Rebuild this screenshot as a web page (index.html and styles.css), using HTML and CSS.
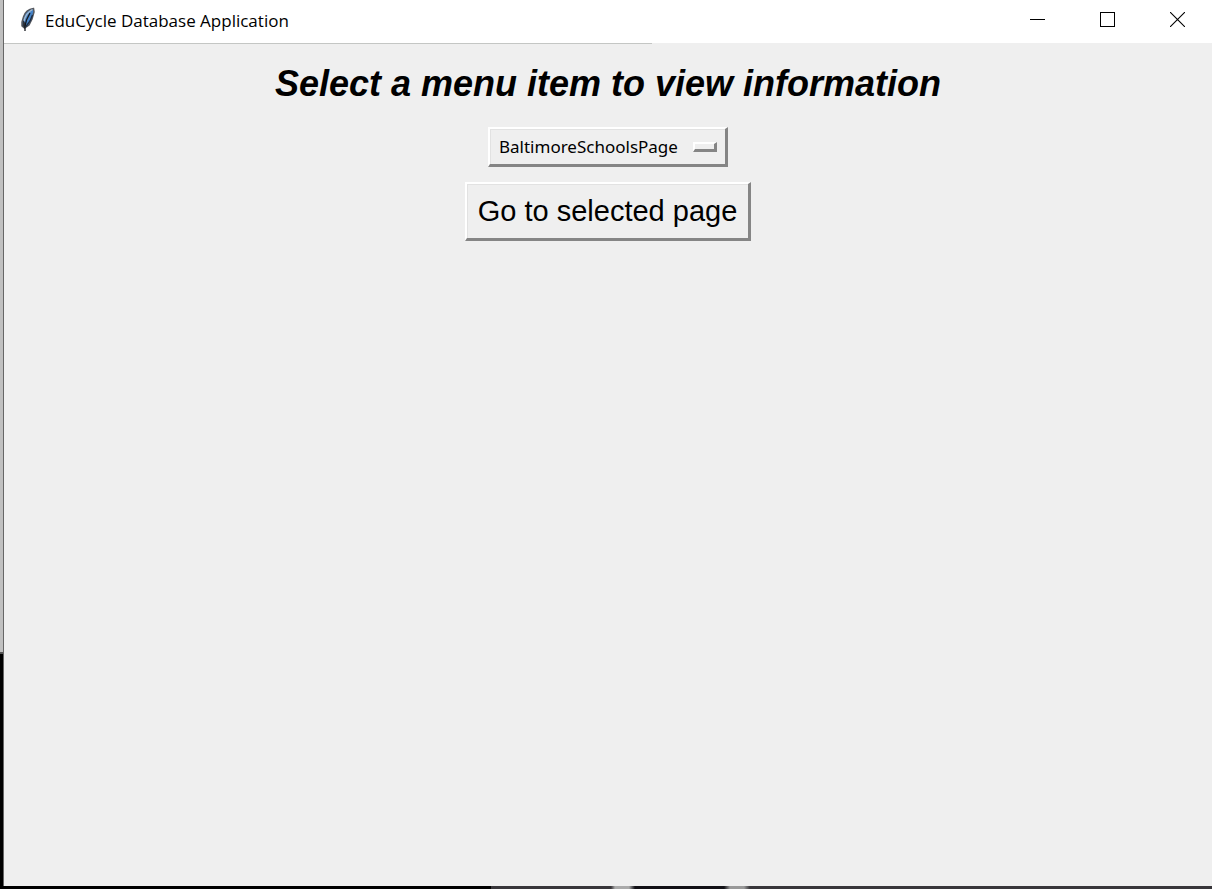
FILE: index.html
```html
<!DOCTYPE html>
<html lang="en">
<head>
<meta charset="utf-8">
<title>EduCycle Database Application</title>
<link rel="stylesheet" href="styles.css">
</head>
<body>
<div class="window">
  <header class="titlebar">
    <svg class="app-icon" width="16" height="26" viewBox="0 0 16 26" aria-hidden="true">
      <path d="M13.500 1.500 C9 2 5 5 3.500 10 L2 15 L2 19 L4.500 21 L9 18 L12 12 L14 5 Z" fill="#4583c8" stroke="#55585e" stroke-width="1.500"/>
      <path d="M12.500 2.500 C8 5 5 9 4 14" fill="none" stroke="#a9bccf" stroke-width="1.400"/>
      <path d="M3 13 L2.500 19 L5 21 L6 17 Z" fill="#30343b"/>
      <path d="M12.500 8 L10 14 L6 19.500" fill="none" stroke="#1c2d45" stroke-width="1.400"/>
      <path d="M10 6 L6.500 13 L5 19 L5 24" fill="none" stroke="#14181e" stroke-width="1.300"/>
    </svg>
    <span class="app-title">EduCycle Database Application</span>
    <div class="window-controls">
      <button class="control" type="button" aria-label="Minimize">
        <svg width="15" height="15" viewBox="0 0 15 15" shape-rendering="crispEdges"><path d="M0 7.5H15" stroke="#000"/></svg>
      </button>
      <button class="control" type="button" aria-label="Maximize">
        <svg width="15" height="15" viewBox="0 0 15 15" shape-rendering="crispEdges"><rect x=".5" y=".5" width="14" height="14" fill="none" stroke="#000"/></svg>
      </button>
      <button class="control" type="button" aria-label="Close">
        <svg width="15" height="15" viewBox="0 0 15 15"><path d="M0 0L15 15M15 0L0 15" stroke="#000" stroke-width="1.1"/></svg>
      </button>
    </div>
  </header>
  <div class="divider"></div>
  <main class="content">
    <h1 class="heading">Select a menu item to view information</h1>
    <div class="option-menu">
      <select class="page-select" aria-label="Page">
        <option>BaltimoreSchoolsPage</option>
      </select>
      <span class="indicator"></span>
    </div>
    <button class="go-button" type="button">Go to selected page</button>
  </main>
</div>
</body>
</html>
```
FILE: styles.css
```css
* {
  box-sizing: border-box;
}

body {
  margin: 0;
  min-height: 100vh;
  display: flex;
  padding: 0 0 3px 3px;
  background:
    linear-gradient(90deg, #000 0 491px, #38363a 491px 611px, #aaa 615px 629px, #111015 635px 724px, #999 730px 744px, #38363a 750px) 0 100% / 100% 3px no-repeat,
    linear-gradient(#c0c0c0 0 652px, #555 652px 654px, #000 654px);
}

.window {
  flex: 1;
  display: flex;
  flex-direction: column;
  border-left: 1px solid #666;
  background: #efefef;
}

.titlebar {
  display: flex;
  align-items: center;
  height: 43px;
  padding: 0 0 4px 16px;
  background: #fff;
}

.app-icon {
  margin-right: 9px;
}

.app-title {
  flex: 1;
  font: 17px/24px "Segoe UI", "Open Sans", sans-serif;
  color: #000;
  padding-top: 2px;
}

.window-controls {
  display: flex;
}

.control {
  width: 70px;
  height: 39px;
  display: flex;
  align-items: center;
  justify-content: center;
  padding: 0;
  border: 0;
  background: none;
}

.divider {
  height: 1px;
  width: 648px;
  margin-bottom: -1px;
  background: #c4c6c4;
}

.content {
  display: flex;
  flex-direction: column;
  align-items: center;
  padding-top: 19px;
}

.heading {
  margin: 0 0 21px;
  font: italic bold 36px/44px "Liberation Sans", Arial, sans-serif;
  color: #000;
  white-space: nowrap;
}

.option-menu {
  display: grid;
  align-items: center;
  margin-bottom: 15px;
}

.page-select,
.indicator {
  grid-area: 1 / 1;
}

.page-select,
.go-button {
  border: solid;
  border-width: 2px 3px 3px 2px;
  border-color: #fff #858585 #858585 #fff;
  border-radius: 0;
  background: #efefef;
  box-shadow: inset 1px 1px #e2e2e2;
  color: #000;
}

.page-select {
  appearance: none;
  width: 240px;
  height: 40px;
  padding: 1px 40px 0 9px;
  font: 17px/24px "Segoe UI", "Noto Sans", sans-serif;
}

.indicator {
  justify-self: end;
  width: 24px;
  height: 10px;
  margin-right: 11px;
  border: solid;
  border-width: 2px 3px 3px 2px;
  border-color: #fff #858585 #858585 #fff;
  pointer-events: none;
}

.go-button {
  height: 59px;
  padding: 0 11px;
  font: 29px/32px "Liberation Sans", Arial, sans-serif;
}
```
